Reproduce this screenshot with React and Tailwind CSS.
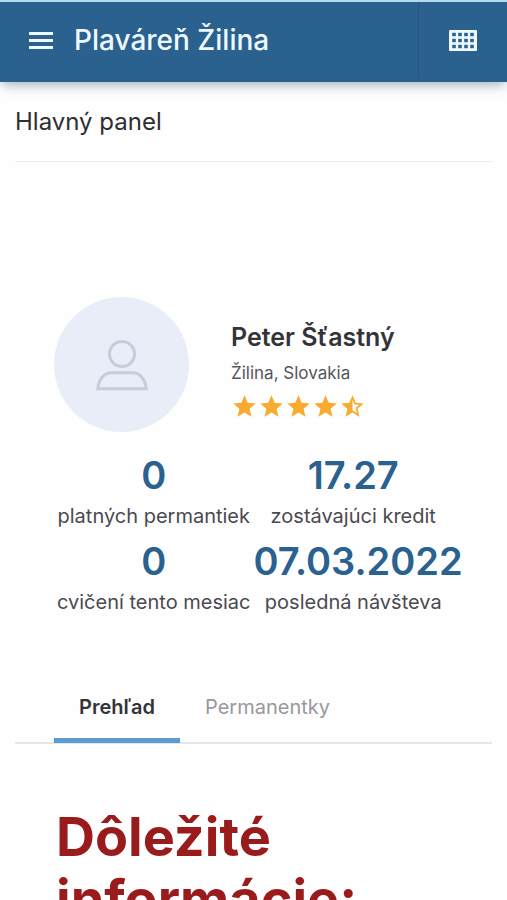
import React from "react";
import { MdStar, MdStarHalf } from "react-icons/md";

const stats = [
  { value: "0", label: "platných permantiek" },
  { value: "17.27", label: "zostávajúci kredit" },
  { value: "0", label: "cvičení tento mesiac" },
  { value: "07.03.2022", label: "posledná návšteva" },
];

function Header() {
  return (
    <header className="flex h-[82px] items-stretch border-t-2 border-[#b5d9f0] bg-[#2a618f] pb-1 text-[#eef8ff] shadow-[0_4px_12px_-2px_rgba(30,60,90,0.45)]">
      <button type="button" aria-label="Menu" className="pr-5 pl-7">
        <svg className="h-6 w-[26px]" viewBox="0 0 26 24" fill="currentColor">
          <rect x="1" y="4" width="24" height="3" />
          <rect x="1" y="11" width="24" height="3" />
          <rect x="1" y="18" width="24" height="3" />
        </svg>
      </button>
      <div className="flex flex-1 items-center text-[28px] font-medium">
        Plaváreň Žilina
      </div>
      <button
        type="button"
        aria-label="Kalendár"
        className="flex w-[89px] items-center justify-center border-l border-[#255783]"
      >
        <svg className="h-[22px] w-7" viewBox="0 0 28 22">
          <rect y="1" width="28" height="21" rx="1" fill="currentColor" />
          <g fill="#2a618f">
            {[4, 10, 16].map((y) =>
              [3.2, 9.2, 15.2, 21.2].map((x) => (
                <rect key={`${x}-${y}`} x={x} y={y - 0.2} width="3.6" height="3.4" />
              ))
            )}
          </g>
        </svg>
      </button>
    </header>
  );
}

function Profile() {
  return (
    <div className="flex items-center gap-[42px]">
      <div className="flex h-[135px] w-[135px] items-center justify-center rounded-full bg-[#e9edf8]">
        <svg
          className="h-[54px] w-[54px] text-[#c8cbda]"
          viewBox="0 0 54 54"
          fill="none"
          stroke="currentColor"
          strokeWidth="3"
        >
          <circle cx="27" cy="16" r="12.5" />
          <path d="M2.8 50.8C3.6 42 8.5 34.8 16.5 34.8H37.5C45.5 34.8 50.4 42 51.2 50.8Z" />
        </svg>
      </div>
      <div className="pt-3">
        <h2 className="text-[25px] leading-8 font-semibold text-[#333338]">Peter Šťastný</h2>
        <p className="mt-2 text-[17px] leading-6 text-[#55555c]">Žilina, Slovakia</p>
        <div className="mt-2 flex text-[27px] text-[#f8ab2e]">
          <MdStar />
          <MdStar />
          <MdStar />
          <MdStar />
          <MdStarHalf />
        </div>
      </div>
    </div>
  );
}

export default function App() {
  return (
    <div className="min-h-screen bg-[#fefefe] font-['Inter',sans-serif]">
      <Header />
      <main className="px-[15px]">
        <h1 className="border-b border-[#ececec] pt-6 pb-[23px] text-2xl text-[#2e2e33]">
          Hlavný panel
        </h1>

        <section className="px-[39px] pt-[135px]">
          <Profile />
          <div className="mt-5 grid grid-cols-2 gap-y-2 text-center">
            {stats.map((item) => (
              <div key={item.label} className="min-w-0 whitespace-nowrap">
                <div className="text-[38px] leading-[46px] font-semibold text-[#2a618f]">
                  {item.value}
                </div>
                <div className="mt-1 text-[20px] leading-7 text-[#4a4a50]">{item.label}</div>
              </div>
            ))}
          </div>
        </section>

        <nav className="mt-[60px] flex border-b-2 border-[#e4e6ea] px-[39px] text-[20px] leading-7">
          <a
            href="#"
            className="-mb-px border-b-[5px] border-[#5b9bd0] px-[25px] pt-[17px] pb-[17px] font-semibold text-[#333338]"
          >
            Prehľad
          </a>
          <a href="#" className="px-[25px] pt-[17px] pb-[17px] text-[#98989c]">
            Permanentky
          </a>
        </nav>

        <section className="px-[41px] pt-[62px]">
          <h2 className="max-w-80 text-[54px] leading-[62px] font-bold text-[#991b1b]">
            Dôležité informácie:
          </h2>
        </section>
      </main>
    </div>
  );
}
